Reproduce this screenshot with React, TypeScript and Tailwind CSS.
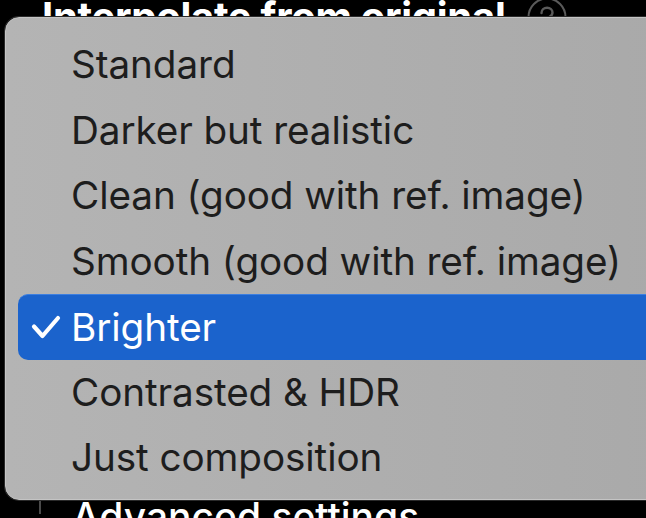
const items = [
  'Standard',
  'Darker but realistic',
  'Clean (good with ref. image)',
  'Smooth (good with ref. image)',
  'Brighter',
  'Contrasted & HDR',
  'Just composition',
];

const selected = 'Brighter';

const HelpIcon = () => (
  <svg width="40" height="40" viewBox="0 0 40 40" className="shrink-0">
    <circle cx="20" cy="20" r="18.5" fill="none" stroke="#5a5a5a" strokeWidth="2" />
    <path d="M14.5 16c0-3.2 2.5-5.2 5.6-5.2 3.1 0 5.4 1.9 5.4 4.7 0 2.2-1.3 3.3-2.9 4.3-1.5.9-2.3 1.6-2.3 3.2v1" fill="none" stroke="#5a5a5a" strokeWidth="2.4" strokeLinecap="round" />
  </svg>
);

const Check = () => (
  <svg width="30" height="24" viewBox="0 0 30 24" className="shrink-0">
    <path d="M3 11.5l8.5 9.5L27 3" fill="none" stroke="white" strokeWidth="4.2" strokeLinecap="round" strokeLinejoin="round" />
  </svg>
);

export default function App() {
  return (
    <div className="relative h-[518px] w-[646px] overflow-hidden bg-black font-['Inter','Liberation_Sans',sans-serif]">
      {/* panel behind the popup */}
      <div className="flex h-full flex-col justify-between">
        <div className="-mt-[3px] flex items-center gap-[22px] pl-[42px]">
          <span className="text-[40px] font-bold leading-none tracking-[-0.3px] text-white">Interpolate from original</span>
          <div className="-mt-[1px]">
            <HelpIcon />
          </div>
        </div>
        <div className="flex items-start">
          <div className="ml-[39px] h-[18px] w-[2px] bg-[#4a4a4a]" />
          <span className="ml-[31px] -mb-[18px] mt-[1px] text-[39px] font-medium leading-none text-white">Advanced settings</span>
        </div>
      </div>

      {/* popup menu */}
      <div className="absolute left-[5px] top-[17px] h-[483px] w-[680px] rounded-[14px] border border-[#c4c4c4] bg-gradient-to-r from-[#b4b4b4] to-[#a9a9a9] pt-[14px] shadow-[0_0_0_1px_#2a2a2a]">
        <ul className="flex flex-col">
          {items.map((item) => {
            const on = item === selected;
            return (
              <li
                key={item}
                className={
                  on
                    ? 'mx-[12px] flex h-[65.5px] items-center rounded-[10px] border-t border-[#3d7fe0] bg-[#1b63cc] pl-[13px] text-white'
                    : 'flex h-[65.5px] items-center pl-[65px] text-[#1d1d1d]'
                }
              >
                {on && <span className="mr-[10px] flex"><Check /></span>}
                <span className="text-[38.7px] leading-none tracking-[-0.1px]">{item}</span>
              </li>
            );
          })}
        </ul>
      </div>
    </div>
  );
}
